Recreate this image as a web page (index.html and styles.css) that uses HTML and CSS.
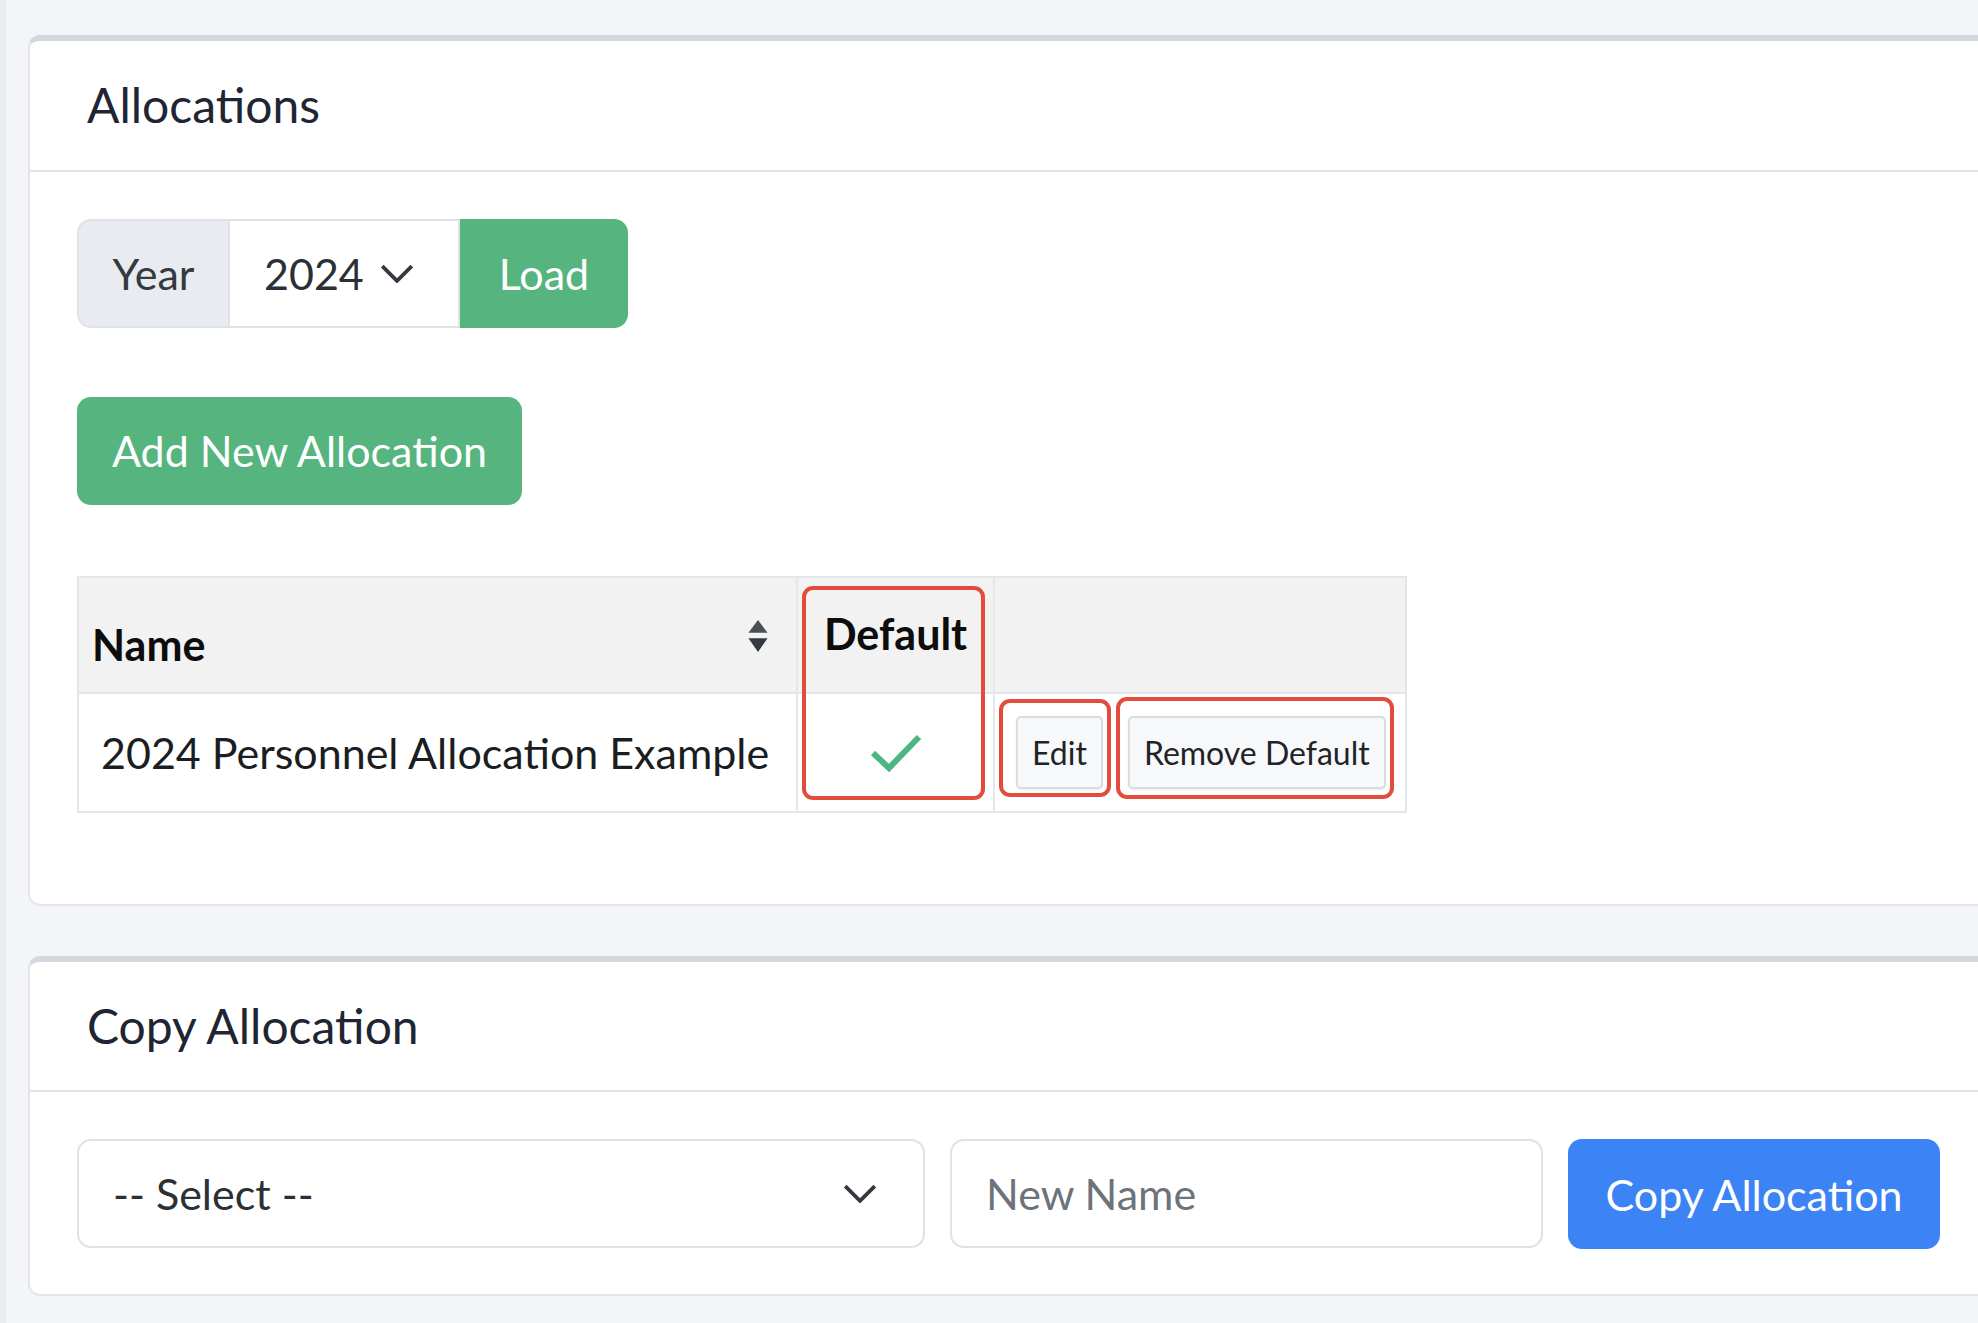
FILE: index.html
```html
<!DOCTYPE html>
<html lang="en">
<head>
<meta charset="utf-8">
<title>Allocations</title>
<link rel="stylesheet" href="styles.css">
</head>
<body>
<div class="page">
  <section class="card">
    <div class="card-header"><h3 class="card-title">Allocations</h3></div>
    <div class="card-body">
      <div class="input-group">
        <span class="addon">Year</span>
        <div class="select year-select">
          <span>2024</span>
          <svg class="chevron" viewBox="0 0 16 9" aria-hidden="true"><path d="M1 1l7 7 7-7"/></svg>
        </div>
        <button class="btn btn-green load-btn">Load</button>
      </div>
      <button class="btn btn-green add-btn">Add New Allocation</button>
      <div class="table-wrap">
        <table class="alloc-table">
          <colgroup>
            <col class="c-name">
            <col class="c-default">
            <col class="c-actions">
          </colgroup>
          <thead>
            <tr>
              <th class="col-name">Name<svg class="sort" viewBox="0 0 20 32" aria-hidden="true"><path class="up" d="M10 1 L19 13 L1 13 Z"/><path class="down" d="M1 18 L19 18 L10 31 Z"/></svg></th>
              <th class="col-default">Default</th>
              <th class="col-actions"></th>
            </tr>
          </thead>
          <tbody>
            <tr>
              <td class="cell-name">2024 Personnel Allocation Example</td>
              <td class="cell-default"><svg class="check" viewBox="0 0 54 40" aria-hidden="true"><path d="M4 20 L20 35 L50 4"/></svg></td>
              <td class="cell-actions"><button class="btn-sm">Edit</button><button class="btn-sm">Remove Default</button></td>
            </tr>
          </tbody>
        </table>
        <span class="mark mark-default"></span>
        <span class="mark mark-edit"></span>
        <span class="mark mark-remove"></span>
      </div>
    </div>
  </section>

  <section class="card">
    <div class="card-header"><h3 class="card-title">Copy Allocation</h3></div>
    <div class="card-body copy-row">
      <div class="select copy-select">
        <span>-- Select --</span>
        <svg class="chevron" viewBox="0 0 16 9" aria-hidden="true"><path d="M1 1l7 7 7-7"/></svg>
      </div>
      <div class="text-input"><span class="placeholder">New Name</span></div>
      <button class="btn btn-blue copy-btn">Copy Allocation</button>
    </div>
  </section>
</div>
</body>
</html>
```

FILE: styles.css
```css
html, body {
  margin: 0;
  padding: 0;
  overflow: hidden;
}

body {
  background: #f4f5f8;
  font-family: "Lato", "Liberation Sans", sans-serif;
  color: #212529;
  border-left: 6px solid #eaecf0;
  min-height: 1323px;
  box-sizing: border-box;
}

.page {
  padding: 35px 0 0 22px;
}

.card {
  width: 2100px;
  background: #fff;
  border: 2px solid #e4e6ea;
  border-top: 6px solid #d3d8e0;
  border-radius: 12px;
  margin-bottom: 50px;
  box-sizing: border-box;
}

.card-header {
  border-bottom: 2px solid #e2e4e7;
  padding: 35px 57px 36px;
}

.card-title {
  margin: 0;
  font-weight: 400;
  font-size: 48px;
  line-height: 1.2;
  color: #1f2533;
}

.card-body {
  padding: 47px 47px 44px;
}

/* input group */
.input-group {
  display: flex;
  height: 109px;
  margin-bottom: 69px;
}

.addon {
  display: flex;
  align-items: center;
  width: 151px;
  justify-content: center;
  background: #e8ebef;
  border: 2px solid #dfe2e6;
  border-right: none;
  border-radius: 14px 0 0 14px;
  font-size: 43px;
  color: #343a40;
  box-sizing: border-box;
}

.select {
  display: flex;
  align-items: center;
  justify-content: space-between;
  background: #fff;
  border: 2px solid #dfe2e6;
  font-size: 43px;
  color: #2b3035;
  box-sizing: border-box;
}

.year-select {
  width: 232px;
  padding: 0 44px 0 34px;
  border-left: 2px solid #dfe2e6;
}

.chevron {
  width: 34px;
  height: 19px;
  fill: none;
  stroke: #343a40;
  stroke-width: 1.8;
}

.btn {
  border: none;
  font-family: inherit;
  font-size: 43px;
  color: #fff;
  padding: 0 35px;
  cursor: pointer;
}

.btn-green {
  background: #56b47f;
}

.btn-blue {
  background: #3c84f5;
}

.load-btn {
  width: 168px;
  padding: 0;
  border-radius: 0 14px 14px 0;
}

.add-btn {
  display: block;
  width: 445px;
  padding: 0;
  height: 108px;
  border-radius: 14px;
  margin-bottom: 71px;
}

/* table */
.table-wrap {
  position: relative;
  width: 1328px;
  margin-bottom: 47px;
}

.alloc-table {
  border-collapse: collapse;
  table-layout: fixed;
  width: 1328px;
  border: 2px solid #e4e7ea;
  font-size: 43px;
}

.c-name { width: 719px; }
.c-default { width: 197px; }
.c-actions { width: 412px; }

.alloc-table th,
.alloc-table td {
  border: 2px solid #e4e7ea;
  padding: 0;
  box-sizing: border-box;
}

.alloc-table thead th {
  background: #f2f2f2;
  height: 116px;
  font-weight: 700;
  color: #0d0d0d;
  text-align: left;
}

.col-name {
  position: relative;
  vertical-align: bottom;
  padding: 0 15px 14px 13px !important;
  line-height: 1.5;
}

.sort {
  position: absolute;
  right: 26px;
  top: 41px;
  width: 24px;
  height: 34px;
}

.sort .up { fill: #4a4f55; }
.sort .down { fill: #343a40; }

.col-default {
  vertical-align: middle;
  text-align: center !important;
  padding-bottom: 2px !important;
  white-space: nowrap;
}

.alloc-table tbody td {
  height: 119px;
  vertical-align: middle;
}

.cell-name {
  padding-left: 22px !important;
  color: #1a1d21;
  white-space: nowrap;
}

.cell-default {
  text-align: center;
}

.check {
  display: inline-block;
  vertical-align: middle;
  width: 54px;
  height: 40px;
  fill: none;
  stroke: #4db783;
  stroke-width: 6;
  margin-bottom: 6px;
}

.cell-actions {
  padding-left: 21px !important;
  white-space: nowrap;
}

.btn-sm {
  height: 73px;
  padding: 0 14px;
  margin-right: 25px;
  background: #f7f8f9;
  border: 2px solid #d9dcdf;
  border-radius: 5px;
  font-family: inherit;
  font-size: 32px;
  color: #1f2328;
  vertical-align: middle;
  box-shadow: 0 1px 2px rgba(0, 0, 0, 0.08);
}

.btn-sm:last-child {
  margin-right: 0;
}

/* annotation outlines */
.mark {
  position: absolute;
  border: 4px solid #e34b3b;
  border-radius: 11px;
  box-sizing: border-box;
}

.mark-default { left: 725px; top: 10px; width: 183px; height: 214px; }
.mark-edit    { left: 922px; top: 123px; width: 112px; height: 98px; }
.mark-remove  { left: 1039px; top: 121px; width: 278px; height: 102px; }

/* copy row */
.copy-row {
  display: flex;
  gap: 25px;
  padding-bottom: 45px;
}

.copy-select {
  width: 848px;
  height: 109px;
  padding: 0 46px 0 34px;
  border-radius: 14px;
}

.text-input {
  display: flex;
  align-items: center;
  width: 593px;
  height: 109px;
  padding: 0 34px;
  border: 2px solid #dfe2e6;
  border-radius: 14px;
  box-sizing: border-box;
  font-size: 43px;
}

.placeholder {
  color: #6c737a;
}

.copy-btn {
  width: 372px;
  padding: 0;
  height: 110px;
  border-radius: 14px;
}
```
